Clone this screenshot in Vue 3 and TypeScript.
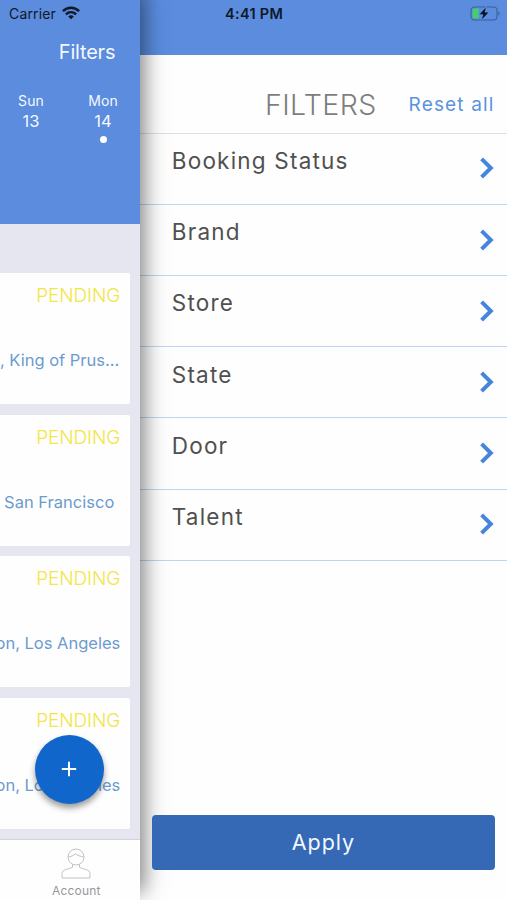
<script setup lang="ts">
interface Day { name: string; date: number; marked: boolean }
interface Booking { status: string; place: string; kind: string }

const days: Day[] = [
  { name: 'Sun', date: 13, marked: false },
  { name: 'Mon', date: 14, marked: true },
]
const bookings: Booking[] = [
  { status: 'PENDING', place: ', King of Prus...', kind: 'king' },
  { status: 'PENDING', place: 'San Francisco', kind: 'francisco' },
  { status: 'PENDING', place: 'on, Los Angeles', kind: 'angeles' },
  { status: 'PENDING', place: 'on, Los Angeles', kind: 'angeles' },
]
const filters: string[] = ['Booking Status', 'Brand', 'Store', 'State', 'Door', 'Talent']
</script>

<template>
  <div class="screen">
    <section class="home">
      <header class="home-head">
        <div class="home-title"><span>Filters</span></div>
        <div class="days">
          <div v-for="day in days" :key="day.date" class="day">
            <span class="day-name">{{ day.name }}</span>
            <span class="day-date">{{ day.date }}</span>
            <i v-if="day.marked" class="dot"></i>
          </div>
        </div>
      </header>
      <div class="list">
        <article v-for="(b, i) in bookings" :key="i" class="card">
          <span class="status">{{ b.status }}</span>
          <span class="place" :class="b.kind">{{ b.place }}</span>
        </article>
      </div>
      <nav class="tabs">
        <div class="tab">
          <svg width="30" height="31" viewBox="0 0 30 31" fill="none" stroke="#c2c2c4" stroke-width="1">
            <circle cx="15" cy="9" r="8" />
            <path d="M7.2 9C10 8.6 12.5 7.7 14.5 5.7C16.5 7.7 19.5 8.5 22.8 9M11.5 16.2V19.3C8 21.2 1 21.4 1 25.5V30H29V25.5C29 21.4 22 21.2 18.5 19.3V16.2" />
          </svg>
          <span>Account</span>
        </div>
      </nav>
      <button class="add" aria-label="Add">
        <svg width="16" height="16" viewBox="0 0 16 16" stroke="#fff" stroke-width="2"><path d="M8 .8V15.2M.8 8H15.2" /></svg>
      </button>
    </section>

    <aside class="drawer">
      <div class="drawer-top"></div>
      <header class="drawer-head">
        <h1>FILTERS</h1>
        <a class="reset">Reset all</a>
      </header>
      <ul class="filters">
        <li v-for="f in filters" :key="f">
          <span>{{ f }}</span>
          <svg width="14" height="22" viewBox="0 0 14 22" fill="none" stroke="#4585dc" stroke-width="4"><path d="M1.6 1.9L10.8 11L1.6 20.1" /></svg>
        </li>
      </ul>
      <button class="apply"><span>Apply</span></button>
    </aside>

    <div class="statusbar">
      <span class="carrier">Carrier</span>
      <svg class="wifi" width="18" height="14" viewBox="0 0 18 14" fill="none" stroke="#101827" stroke-width="2.5">
        <path d="M.9 5.1C5.5.5 12.5.5 17.1 5.1M3.9 8.3C6.9 5.5 11.1 5.5 14.1 8.3" />
        <path d="M9 13.2L6.2 10.4C7.8 8.9 10.2 8.9 11.8 10.4Z" fill="#101827" stroke="none" />
      </svg>
      <span class="time">4:41 PM</span>
      <svg class="battery" width="31" height="15" viewBox="0 0 31 15">
        <rect x="1" y="1" width="26" height="13" rx="3.5" fill="none" stroke="#3d609e" stroke-width="1.1" />
        <path d="M28.5 5.2C30.2 6 30.2 8.9 28.5 9.7Z" fill="#3d609e" />
        <path d="M4.5 2.6H8.6V12.4H4.5Q2.6 12.4 2.6 10.5V4.5Q2.6 2.6 4.5 2.6Z" fill="#43d06a" />
        <path d="M15.8 1.8L9.7 8.2H13.4L12 13.2L18.3 6.6H14.6Z" fill="#07101c" stroke="#5b8cde" stroke-width="1.6" paint-order="stroke" />
      </svg>
    </div>
  </div>
</template>

<style>
body { margin: 0; }
</style>

<style scoped>
.screen { position: relative; display: flex; width: 507px; height: 900px; overflow: hidden; background: #fefefe; font-family: Inter, "Liberation Sans", sans-serif; }
.screen * { box-sizing: border-box; }
button { border: 0; padding: 0; font: inherit; }
.home { position: relative; z-index: 1; display: flex; flex-direction: column; flex: 0 0 140.3px; min-width: 0; height: 900px; background: #e6e6f1; box-shadow: 4px -8px 20px 0 rgba(0, 0, 0, .5); }
.home-head { height: 224px; flex: none; background: #5b8cde; color: #f4f8ff; padding-top: 38px; }
.home-title { height: 53px; display: flex; justify-content: flex-end; padding-right: 25px; font-size: 20px; line-height: 29px; letter-spacing: -.2px; }
.days { display: flex; margin-left: -5px; }
.day { flex: 0 0 72px; display: flex; flex-direction: column; align-items: center; }
.day-name { font-size: 14px; line-height: 20px; letter-spacing: .1px; }
.day-date { font-size: 16.5px; line-height: 20px; }
.dot { width: 7px; height: 7px; margin-top: 5px; border-radius: 50%; background: #fff; }
.list { flex: none; height: 615px; padding: 49px 10px 0 0; display: flex; flex-direction: column; gap: 10.7px; }
.card { flex: 0 0 131px; display: flex; flex-direction: column; align-items: flex-end; background: #fefefe; border-radius: 0 2px 2px 0; padding: 11px 10px 0 0; overflow: hidden; white-space: nowrap; }
.status { font-size: 19px; line-height: 24px; font-weight: 300; color: #f3e545; letter-spacing: -.1px; }
.place { margin-top: 41px; font-size: 16.5px; line-height: 22px; color: #6c9bd0; }
.king { padding-right: 1px; }
.francisco { padding-right: 6px; }
.tabs { flex: 1; background: #fefefe; border-top: 1px solid #d2d2da; display: flex; justify-content: flex-end; }
.tab { width: 128px; padding-top: 8px; display: flex; flex-direction: column; align-items: center; }
.tab span { margin-top: 4px; font-size: 12px; line-height: 16px; color: #98989b; letter-spacing: .15px; }
.add { position: absolute; left: 35px; top: 735px; width: 69px; height: 69px; border-radius: 50%; background: #1066cb; display: flex; align-items: center; justify-content: center; padding: 0 1px 1px 0; box-shadow: 0 4px 6px rgba(0, 0, 0, .4); }
.drawer { flex: 1; min-width: 0; display: flex; flex-direction: column; }
.drawer-top { height: 54.5px; flex: none; background: #5b8cde; }
.drawer-head { flex: none; height: 79.2px; display: flex; align-items: center; justify-content: flex-end; padding: 22px 13px 0 0; border-bottom: 1px solid #dedede; }
h1 { margin: 0 32px 0 0; font-size: 28.5px; line-height: 36px; font-weight: 350; letter-spacing: .4px; color: #7e7e7e; }
.reset { font-size: 19px; line-height: 24px; letter-spacing: 1.15px; color: #5a93de; margin-right: -.5px; }
.filters { list-style: none; margin: 0; padding: 0; }
.filters li { height: 71.2px; border-bottom: 1px solid #bed5ef; display: flex; justify-content: space-between; padding: 12.3px 13px 0 31.5px; }
.filters span { font-size: 22.5px; line-height: 30px; letter-spacing: 1.2px; color: #505050; }
.filters svg { margin-top: 11.4px; }
.apply { margin: auto 12.5px 30.5px 12px; height: 55px; border-radius: 4px; background: #3568b5; color: #f3f7ff; font-size: 21.5px; letter-spacing: .9px; position: relative; z-index: 2; }
.statusbar { position: absolute; z-index: 3; inset: 0 0 auto 0; height: 27px; display: flex; align-items: center; padding: 0 6px 0 9px; color: #101827; }
.carrier { width: 48px; flex: none; font-size: 14px; letter-spacing: .15px; }
.wifi { margin-left: 5px; margin-top: -1px; }
.time { margin-left: 145px; font-size: 14.5px; font-weight: 600; letter-spacing: .3px; white-space: nowrap; }
.battery { margin-left: auto; margin-top: -1px; }
</style>
